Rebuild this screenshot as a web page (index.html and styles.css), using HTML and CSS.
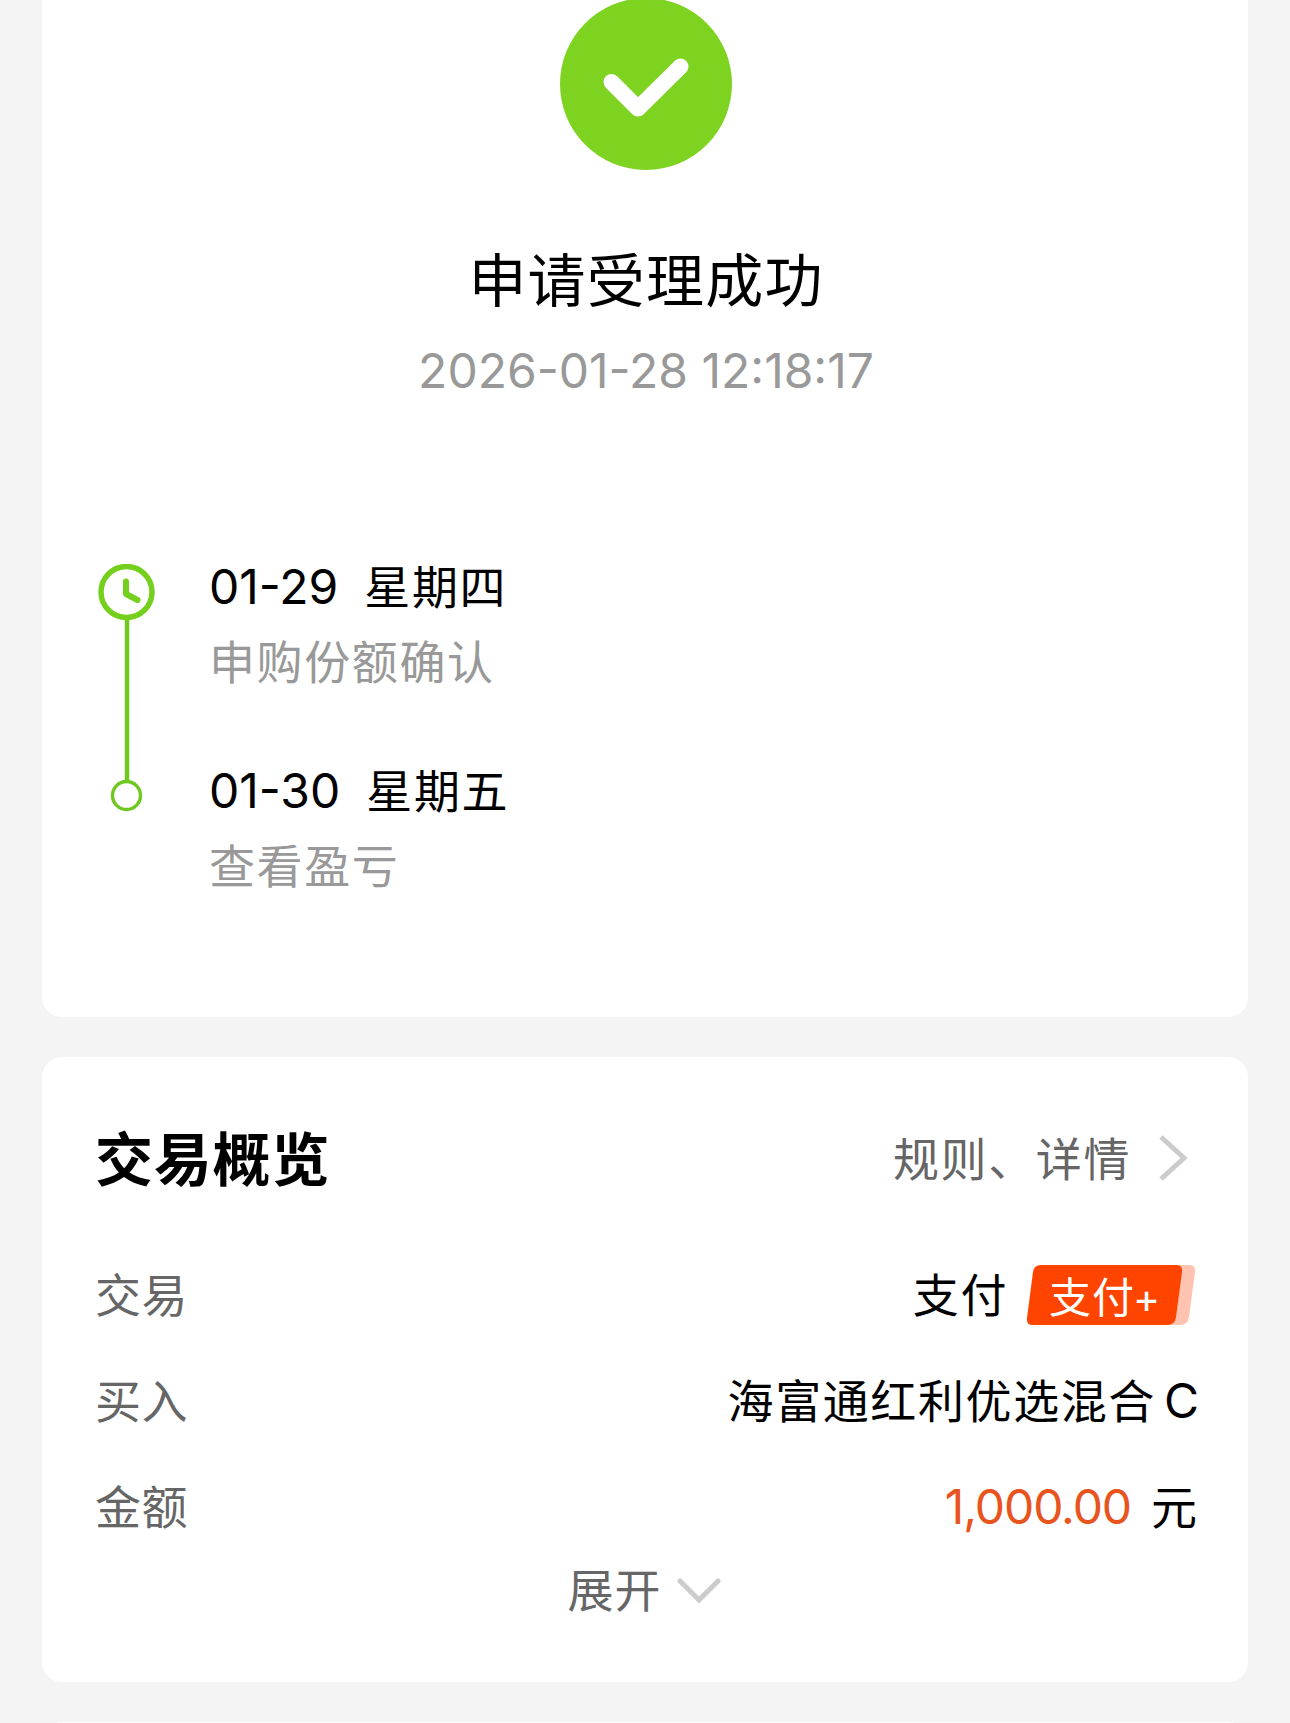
FILE: index.html
```html
<!DOCTYPE html>
<html lang="zh-CN">
<head>
    <meta charset="UTF-8">
    <meta name="viewport" content="width=device-width, initial-scale=1.0">
    <title>交易详情</title>
    <link rel="stylesheet" href="styles.css">
</head>
<body>
    <div class="card result">
        <svg class="result-icon" viewBox="0 0 172 172">
            <circle cx="86" cy="86" r="86" fill="#7ed321"/>
            <path d="M51.500 84 L78 110.500 L120.500 68.500" fill="none" stroke="#fff" stroke-width="16" stroke-linecap="round" stroke-linejoin="round"/>
        </svg>
        <h1>申请受理成功</h1>
        <p class="time num">2026-01-28 12:18:17</p>

        <div class="steps">
            <svg class="steps-line" viewBox="0 0 58 250">
                <path d="M29 55 V218" stroke="#6fc820" stroke-width="4.500"/>
                <circle cx="28.500" cy="28" r="25.500" fill="none" stroke="#74d01c" stroke-width="5.500"/>
                <path d="M28 17.500 V30 L39.500 36" fill="none" stroke="#74d01c" stroke-width="6" stroke-linecap="round" stroke-linejoin="round"/>
                <circle cx="28.500" cy="231.500" r="14" fill="#fff" stroke="#6fc820" stroke-width="3.400"/>
            </svg>
            <div class="steps-list">
                <div class="step">
                    <p class="step-date"><span class="num">01-29</span><span>星期四</span></p>
                    <p class="step-text">申购份额确认</p>
                </div>
                <div class="step">
                    <p class="step-date"><span class="num">01-30</span><span>星期五</span></p>
                    <p class="step-text">查看盈亏</p>
                </div>
            </div>
        </div>
    </div>

    <div class="card overview">
        <div class="overview-head">
            <h2>交易概览</h2>
            <a class="link">规则、<span>详情</span>
                <svg class="arrow-right" viewBox="0 0 30 48">
                    <path d="M3 3 L26 24 L3 45" fill="none" stroke="#ccc" stroke-width="5"/>
                </svg>
            </a>
        </div>
        <div class="row">
            <span class="label">交易</span>
            <span class="value"><span>支付</span>
                <span class="badge">
                    <svg class="badge-bg" viewBox="0 0 170 60">
                        <path d="M22 0 H163 Q170 0 169 7 L163 52 Q162 60 154 60 H16 Z" fill="#ffc3b0"/>
                        <path d="M15 0 H150 Q157 0 156 7 L150 52 Q149 60 141 60 H7 Q0 60 1 53 L7 7 Q8 0 15 0 Z" fill="#ff4400"/>
                    </svg>
                    <span class="badge-text">支付<span class="num">+</span></span>
                </span>
            </span>
        </div>
        <div class="row">
            <span class="label">买入</span>
            <span class="value"><span>海富通红利优选混合</span><span class="num fund-class">C</span></span>
        </div>
        <div class="row">
            <span class="label">金额</span>
            <span class="value"><span class="num amount">1,000.00</span><span class="unit">元</span></span>
        </div>
        <div class="more">
            <span>展开</span>
            <svg class="arrow-down" viewBox="0 0 44 26">
                <path d="M3 3 L22 22 L41 3" fill="none" stroke="#ccc" stroke-width="5" stroke-linecap="round"/>
            </svg>
        </div>
    </div>

    <div class="card next"></div>
</body>
</html>
```

FILE: styles.css
```css
* {
    box-sizing: border-box;
    margin: 0;
    padding: 0;
}

body {
    height: 1723px;
    overflow: hidden;
    padding: 0 42px;
    background-color: #f4f4f4;
    color: #000;
    font-family: "Noto Sans CJK SC", sans-serif;
    font-size: 46px;
    letter-spacing: 1.6px;
}

.num {
    font-family: Inter, "Noto Sans CJK SC", sans-serif;
    font-size: 48px;
    letter-spacing: 0;
}

.card {
    width: 1206px;
    background-color: #fff;
    border-radius: 20px;
}

.result {
    height: 1017px;
    padding-left: 2px;
    border-radius: 0 0 20px 20px;
    display: flex;
    flex-direction: column;
    align-items: center;
}

.result-icon {
    display: block;
    width: 172px;
    height: 172px;
    margin-top: -2px;
    flex-shrink: 0;
}

h1 {
    margin-top: 67px;
    font-size: 58px;
    font-weight: 400;
    line-height: 80px;
    letter-spacing: 1.2px;
}

.time {
    margin-top: 24px;
    line-height: 60px;
    color: #999;
}

.steps {
    align-self: stretch;
    display: flex;
    margin-top: 163px;
    padding-left: 54px;
}

.steps-line {
    width: 58px;
    height: 250px;
}

.steps-list {
    padding-left: 53px;
}

.step {
    height: 204px;
}

.step-date {
    display: flex;
    gap: 26px;
    height: 44px;
    line-height: 41px;
}

.step-date .num {
    line-height: 45px;
}

.step-text {
    margin-top: 30px;
    height: 44px;
    line-height: 43px;
    color: #999;
}

.overview {
    height: 625px;
    margin-top: 40px;
    padding: 59px 51px 0 53px;
}

.overview-head {
    display: flex;
    justify-content: space-between;
    align-items: center;
    height: 80px;
    margin-bottom: 43px;
}

h2 {
    font-size: 58px;
    font-weight: 700;
    letter-spacing: 0.8px;
}

.link {
    display: flex;
    align-items: center;
    color: #666;
}

.arrow-right {
    width: 30px;
    height: 48px;
    margin-top: 4px;
    margin-left: 27px;
    margin-right: 9px;
}

.row {
    display: flex;
    justify-content: space-between;
    align-items: center;
    height: 106px;
}

.label {
    color: #666;
    letter-spacing: 0.5px;
}

.value {
    display: flex;
    align-items: center;
}

.badge {
    position: relative;
    width: 170px;
    height: 60px;
    margin-top: 6px;
    margin-left: 18px;
    margin-right: 1px;
}

.badge-bg {
    display: block;
    width: 170px;
    height: 60px;
}

.badge-text {
    position: absolute;
    left: 23px;
    top: 0;
    color: #fff;
    font-size: 42px;
    line-height: 59px;
    letter-spacing: 1px;
    white-space: nowrap;
}

.badge-text .num {
    margin-left: -2px;
    font-size: 41px;
}

.fund-class {
    margin-top: 4px;
    margin-left: 8px;
    margin-right: -2px;
}

.amount {
    margin-top: 4px;
    color: #e8541e;
    letter-spacing: -1.1px;
}

.unit {
    margin-left: 20px;
    letter-spacing: 0;
}

.more {
    display: flex;
    justify-content: center;
    align-items: center;
    height: 60px;
    padding-right: 4px;
    color: #666;
    letter-spacing: 1px;
}

.arrow-down {
    width: 44px;
    height: 26px;
    margin-top: 8px;
    margin-left: 15px;
}

.next {
    height: 60px;
    margin-top: 40px;
}
```
